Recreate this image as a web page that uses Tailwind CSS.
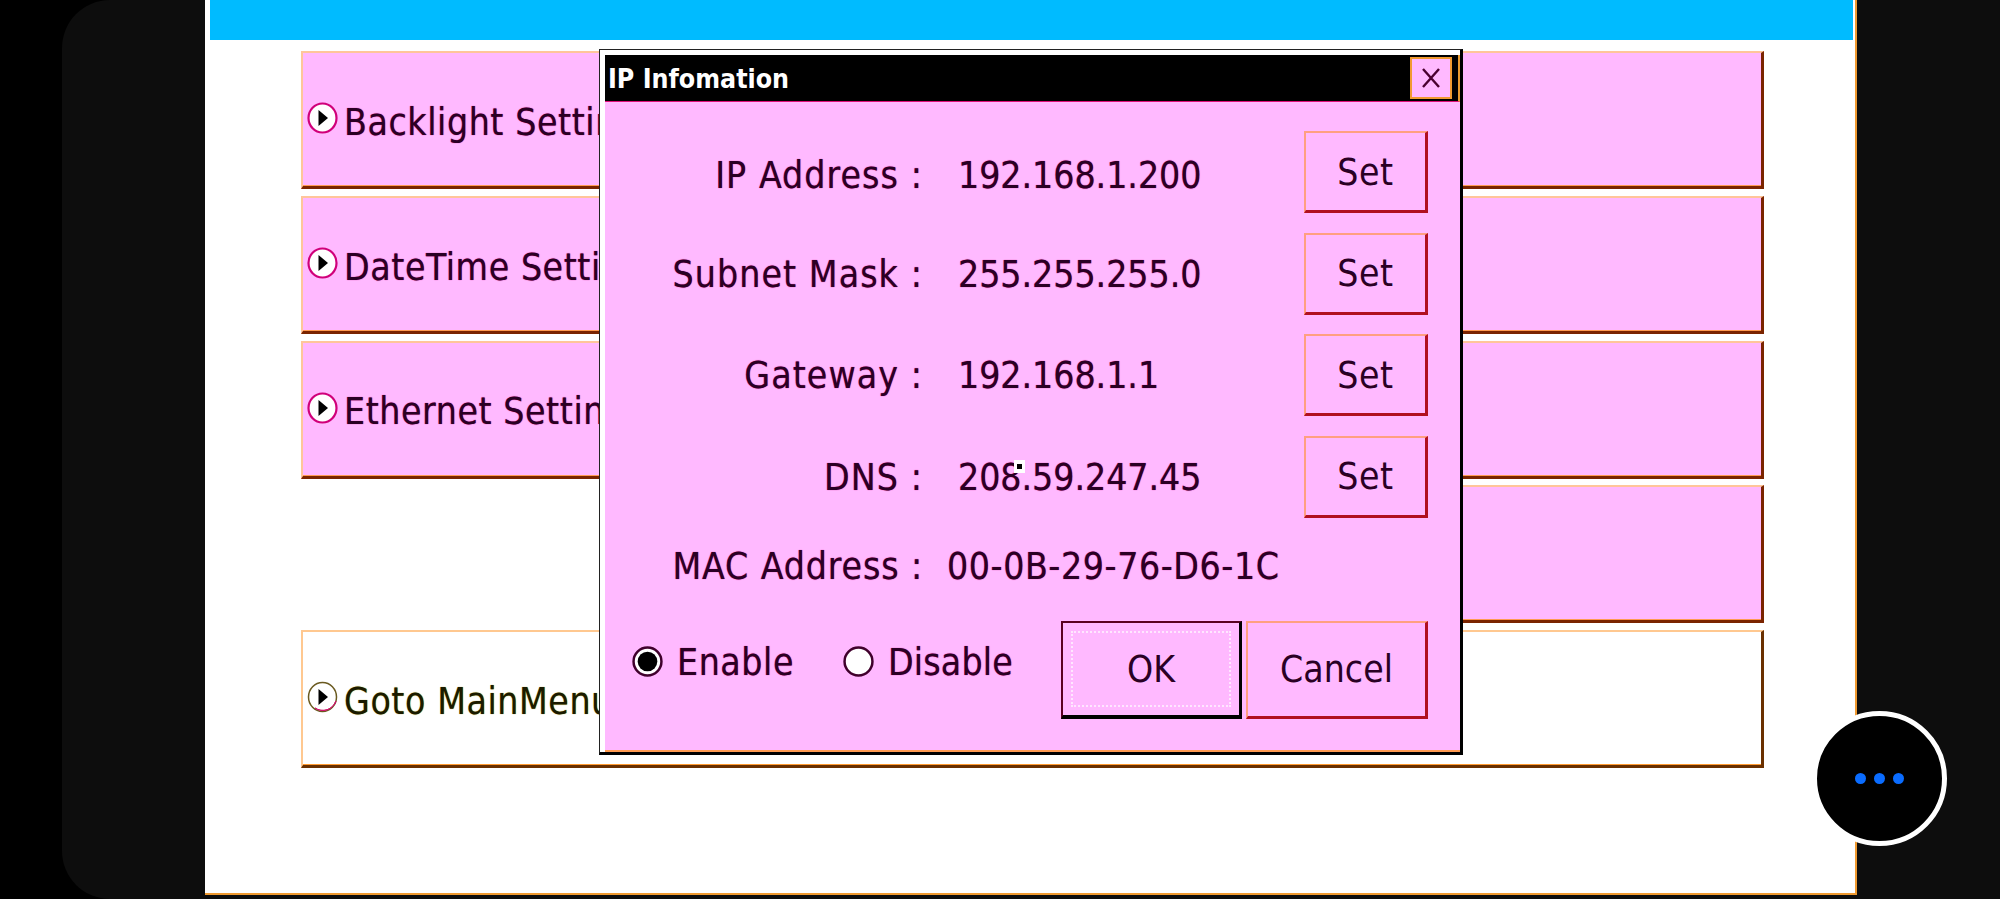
<!DOCTYPE html>
<html lang="en">
<head>
    <meta charset="UTF-8">
    <meta name="viewport" content="width=device-width, initial-scale=1.0">
    <title>IP Infomation</title>
    <script src="https://cdn.jsdelivr.net/npm/@tailwindcss/browser@4"></script>
</head>
<body class="relative w-[2000px] h-[899px] overflow-hidden bg-black [font-family:'DejaVu_Sans_Condensed','DejaVu_Sans',sans-serif] [font-stretch:condensed] text-[37px] text-[#2a0024] [text-shadow:0_0_1px_#c0006a]">
    <!-- phone frame -->
    <div class="ml-[62px] h-full bg-[#0d0d0d] rounded-l-[48px] pl-[143px]">
        <div class="w-[1652px] h-[895px] bg-white border-r-2 border-b-2 border-[#f09a30]">
            <div class="ml-[5px] mr-[2px] h-[40px] bg-[#00bbff]"></div>

            <!-- settings rows, they carry on under the dialog -->
            <div class="pl-[96px] pt-[11px] w-[1559px] flex flex-col gap-[6.75px]">
                <div class="h-[138px] flex items-center pl-[4px] bg-[#ffb9ff] border-t-2 border-l-2 border-t-[#ffc59a] border-l-[#ffc59a] border-r-[3px] border-b-[3px] border-r-[#7a2400] border-b-[#7a2400] shadow-[inset_0_-1px_0_#ff9a50]">
                    <svg class="w-[31px] h-[32px] -mt-[3px] mr-[6px] shrink-0" viewBox="0 0 31 32"><ellipse cx="15.5" cy="16" rx="14" ry="14.5" fill="#fff" stroke="#d0007a" stroke-width="2.2"/><path d="M11.5 8 L21 16 L11.5 24 Z" fill="#000"/></svg>
                    <span class="mt-[6px] whitespace-nowrap tracking-[0.6px]">Backlight Setting</span>
                </div>
                <div class="h-[138px] flex items-center pl-[4px] bg-[#ffb9ff] border-t-2 border-l-2 border-t-[#ffc59a] border-l-[#ffc59a] border-r-[3px] border-b-[3px] border-r-[#7a2400] border-b-[#7a2400] shadow-[inset_0_-1px_0_#ff9a50]">
                    <svg class="w-[31px] h-[32px] -mt-[3px] mr-[6px] shrink-0" viewBox="0 0 31 32"><ellipse cx="15.5" cy="16" rx="14" ry="14.5" fill="#fff" stroke="#d0007a" stroke-width="2.2"/><path d="M11.5 8 L21 16 L11.5 24 Z" fill="#000"/></svg>
                    <span class="mt-[6px] whitespace-nowrap tracking-[0.6px]">DateTime Setting</span>
                </div>
                <div class="h-[138px] flex items-center pl-[4px] bg-[#ffb9ff] border-t-2 border-l-2 border-t-[#ffc59a] border-l-[#ffc59a] border-r-[3px] border-b-[3px] border-r-[#7a2400] border-b-[#7a2400] shadow-[inset_0_-1px_0_#ff9a50]">
                    <svg class="w-[31px] h-[32px] -mt-[3px] mr-[6px] shrink-0" viewBox="0 0 31 32"><ellipse cx="15.5" cy="16" rx="14" ry="14.5" fill="#fff" stroke="#d0007a" stroke-width="2.2"/><path d="M11.5 8 L21 16 L11.5 24 Z" fill="#000"/></svg>
                    <span class="mt-[6px] whitespace-nowrap tracking-[0.6px]">Ethernet Setting</span>
                </div>
                <div class="h-[138px] ml-[1000px] bg-[#ffb9ff] border-t-2 border-t-[#ffc59a] border-r-[3px] border-b-[3px] border-r-[#7a2400] border-b-[#7a2400] shadow-[inset_0_-1px_0_#ff9a50]"></div>
                <div class="h-[138px] flex items-center pl-[4px] bg-white text-[#1a1a00] [text-shadow:0_0_1px_#a09000] border-t-2 border-l-2 border-t-[#ffc890] border-l-[#ffc890] border-r-[3px] border-b-[3px] border-r-[#6a3000] border-b-[#6a3000] shadow-[inset_0_-1px_0_#ff9a30]">
                    <svg class="w-[31px] h-[32px] -mt-[3px] mr-[6px] shrink-0" viewBox="0 0 31 32"><ellipse cx="15.5" cy="16" rx="14" ry="14.5" fill="#fff" stroke="#6a5a20" stroke-width="1.5"/><path d="M8 27 A14 14.5 0 0 0 29 20 A14 14 0 0 1 8 27 Z" fill="#ffb9ff" stroke="#d0106a" stroke-width="1"/><path d="M11.5 8 L21 16 L11.5 24 Z" fill="#000"/></svg>
                    <span class="mt-[6px] whitespace-nowrap tracking-[0.6px]">Goto MainMenu</span>
                </div>
            </div>
        </div>
    </div>

    <!-- dialog -->
    <div class="absolute left-[599px] top-[49px] w-[864px] h-[706px] border-t border-l border-[#222] border-r-[3px] border-b-[3px] border-r-black border-b-black">
        <div class="h-full border-t-[5px] border-l-[5px] border-white bg-[#ffb9ff] shadow-[inset_0_-2px_0_#ff9a50]">
            <div class="h-[47px] bg-black border-r-2 border-r-[#e89a30] border-b border-b-[#e0107a] flex items-center justify-between pl-[3px] pr-[6px]">
                <span class="mt-[2px] font-bold text-[26.5px] text-white [text-shadow:none]">IP Infomation</span>
                <div class="w-[42px] h-[42px] bg-[#ffb9ff] border-2 border-[#f09a30] flex items-center justify-center">
                    <svg class="w-[20px] h-[20px]" viewBox="0 0 20 20"><path d="M2 1 L18 19 M18 1 L2 19" stroke="#4a0030" stroke-width="2.4" fill="none"/></svg>
                </div>
            </div>

            <div class="pt-[29px] pr-[32px] flex flex-col gap-[19.5px]">
                <div class="h-[82px] flex items-center">
                    <span class="mt-[7px] w-[318px] text-right whitespace-nowrap tracking-[1.1px]">IP Address :</span>
                    <span class="mt-[7px] ml-[35px]">192.168.1.200</span>
                    <button class="ml-auto w-[124px] h-[82px] pt-[2px] bg-[#ffb9ff] tracking-[0.6px] border-t-2 border-l-2 border-t-[#ff9f80] border-l-[#ff9f80] border-r-[3px] border-b-[3px] border-r-[#b01020] border-b-[#b01020]">Set</button>
                </div>
                <div class="h-[82px] flex items-center">
                    <span class="mt-[2px] w-[318px] text-right whitespace-nowrap tracking-[1.1px]">Subnet Mask :</span>
                    <span class="mt-[2px] ml-[35px]">255.255.255.0</span>
                    <button class="ml-auto w-[124px] h-[82px] pt-[2px] bg-[#ffb9ff] tracking-[0.6px] border-t-2 border-l-2 border-t-[#ff9f80] border-l-[#ff9f80] border-r-[3px] border-b-[3px] border-r-[#b01020] border-b-[#b01020]">Set</button>
                </div>
                <div class="h-[82px] flex items-center">
                    <span class="mt-[2px] w-[318px] text-right whitespace-nowrap tracking-[1.1px]">Gateway :</span>
                    <span class="mt-[2px] ml-[35px]">192.168.1.1</span>
                    <button class="ml-auto w-[124px] h-[82px] pt-[2px] bg-[#ffb9ff] tracking-[0.6px] border-t-2 border-l-2 border-t-[#ff9f80] border-l-[#ff9f80] border-r-[3px] border-b-[3px] border-r-[#b01020] border-b-[#b01020]">Set</button>
                </div>
                <div class="h-[82px] flex items-center">
                    <span class="mt-[2px] w-[318px] text-right whitespace-nowrap tracking-[1.1px]">DNS :</span>
                    <span class="relative mt-[2px] ml-[35px]">208.59.247.45
                        <i class="absolute left-[56px] top-[10px] w-[11px] h-[13px] bg-white flex items-center justify-center"><b class="w-[5px] h-[5px] bg-black"></b></i>
                    </span>
                    <button class="ml-auto w-[124px] h-[82px] pt-[2px] bg-[#ffb9ff] tracking-[0.6px] border-t-2 border-l-2 border-t-[#ff9f80] border-l-[#ff9f80] border-r-[3px] border-b-[3px] border-r-[#b01020] border-b-[#b01020]">Set</button>
                </div>
            </div>

            <div class="mt-[25px] h-[48px] flex items-center">
                <span class="w-[318px] text-right whitespace-nowrap tracking-[0.9px]">MAC Address :</span>
                <span class="ml-[24px] tracking-[0.6px]">00-0B-29-76-D6-1C</span>
            </div>

            <div class="mt-[30px] pl-[27px] pr-[32px] flex items-start">
                <div class="mt-[25px] h-[32px] flex items-center">
                    <svg class="w-[31px] h-[31px] shrink-0" viewBox="0 0 30 30"><circle cx="15" cy="15" r="13.5" fill="#fff" stroke="#40002c" stroke-width="2.4"/><circle cx="15" cy="15" r="9.5" fill="#000"/></svg>
                    <span class="mt-[2px] ml-[14px] tracking-[0.6px]">Enable</span>
                    <svg class="ml-[49px] w-[31px] h-[31px] shrink-0" viewBox="0 0 30 30"><circle cx="15" cy="15" r="13.5" fill="#fff" stroke="#40002c" stroke-width="2.4"/></svg>
                    <span class="mt-[2px] ml-[14px] tracking-[0.2px]">Disable</span>
                </div>
                <button class="ml-auto w-[181px] h-[98px] p-[8px] bg-[#ffb9ff] border-t-2 border-l-2 border-t-[#5a0020] border-l-[#5a0020] border-r-[3px] border-b-[4px] border-r-black border-b-black">
                    <span class="flex items-center justify-center w-full h-full pt-[2px] border-2 border-dotted border-[#ffe6ff]">OK</span>
                </button>
                <button class="ml-[4px] w-[182px] h-[98px] pt-[2px] bg-[#ffb9ff] border-t-2 border-l-2 border-t-[#ff9f80] border-l-[#ff9f80] border-r-[3px] border-b-[3px] border-r-[#b01020] border-b-[#b01020]">Cancel</button>
            </div>
        </div>
    </div>

    <!-- floating assistive button -->
    <div class="absolute left-[1812px] top-[711px] w-[135px] h-[135px] rounded-full bg-black border-[5px] border-white flex items-center justify-center gap-[8px]">
        <span class="w-[11px] h-[11px] rounded-full bg-[#0a6cff]"></span>
        <span class="w-[11px] h-[11px] rounded-full bg-[#0a6cff]"></span>
        <span class="w-[11px] h-[11px] rounded-full bg-[#0a6cff]"></span>
    </div>
</body>
</html>
